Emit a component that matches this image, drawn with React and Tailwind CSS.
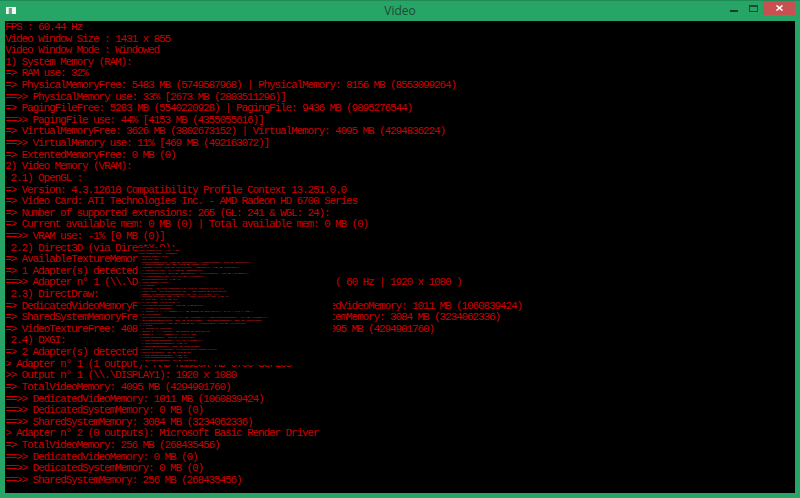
import React from "react";

const logLines = [
  "FPS : 60.44 Hz",
  "Video Window Size : 1431 x 855",
  "Video Window Mode : Windowed",
  "1) System Memory (RAM):",
  "=> RAM use: 32%",
  "=> PhysicalMemoryFree: 5483 MB (5749587968) | PhysicalMemory: 8156 MB (8553099264)",
  "==>> PhysicalMemory use: 33% [2673 MB (2803511296)]",
  "=> PagingFileFree: 5283 MB (5540220928) | PagingFile: 9436 MB (9895276544)",
  "==>> PagingFile use: 44% [4153 MB (4355055616)]",
  "=> VirtualMemoryFree: 3626 MB (3802673152) | VirtualMemory: 4095 MB (4294836224)",
  "==>> VirtualMemory use: 11% [469 MB (492163072)]",
  "=> ExtentedMemoryFree: 0 MB (0)",
  "2) Video Memory (VRAM):",
  " 2.1) OpenGL :",
  "=> Version: 4.3.12618 Compatibility Profile Context 13.251.0.0",
  "=> Video Card: ATI Technologies Inc. - AMD Radeon HD 6700 Series",
  "=> Number of supported extensions: 265 (GL: 241 & WGL: 24):",
  "=> Current available mem: 0 MB (0) | Total available mem: 0 MB (0)",
  "==>> VRAM use: -1% [0 MB (0)]",
  " 2.2) Direct3D (via DirectX 9):",
  "=> AvailableTextureMemory: 4085 MB (4283432960)",
  "=> 1 Adapter(s) detected:",
  "==>> Adapter n° 1 (\\\\.\\DISPLAY1): AMD Radeon HD 6700 Series ( 60 Hz | 1920 x 1080 )",
  " 2.3) DirectDraw:",
  "=> DedicatedVideoMemoryFree: 1011 MB (1060839424) | DedicatedVideoMemory: 1011 MB (1060839424)",
  "=> SharedSystemMemoryFree: 3084 MB (3234062336) | SharedSystemMemory: 3084 MB (3234062336)",
  "=> VideoTextureFree: 4085 MB (4283432960) | VideoTexture: 4095 MB (4294901760)",
  " 2.4) DXGI:",
  "=> 2 Adapter(s) detected:",
  "> Adapter n° 1 (1 output): AMD Radeon HD 6700 Series",
  ">> Output n° 1 (\\\\.\\DISPLAY1): 1920 x 1080",
  "=> TotalVideoMemory: 4095 MB (4294901760)",
  "==>> DedicatedVideoMemory: 1011 MB (1060839424)",
  "==>> DedicatedSystemMemory: 0 MB (0)",
  "==>> SharedSystemMemory: 3084 MB (3234062336)",
  "> Adapter n° 2 (0 outputs): Microsoft Basic Render Driver",
  "=> TotalVideoMemory: 256 MB (268435456)",
  "==>> DedicatedVideoMemory: 0 MB (0)",
  "==>> DedicatedSystemMemory: 0 MB (0)",
  "==>> SharedSystemMemory: 256 MB (268435456)",
];

function TitleBar() {
  return (
    <div className="relative flex h-[20px] shrink-0 items-center justify-center">
      <svg className="absolute left-[6px] top-[6px]" width="10" height="7" viewBox="0 0 10 7">
        <rect width="10" height="7" fill="#f2f7f4" />
        <rect x="2" y="1" width="1" height="6" fill="#cfe0d8" />
        <rect x="3" y="1" width="3" height="6" fill="#7f9c92" />
      </svg>
      <span className="font-['Open_Sans',sans-serif] text-[12px] leading-none text-[#1d4a34]">Video</span>
      <div className="absolute right-[5px] top-0 flex items-start">
        <svg className="mr-[11px] mt-[4px]" width="8" height="7" viewBox="0 0 8 7">
          <rect x="0" y="5" width="8" height="2" fill="#12402a" />
        </svg>
        <svg className="mr-[5px] mt-[4px]" width="9" height="7" viewBox="0 0 9 7">
          <rect x="0.5" y="0.5" width="8" height="6" fill="none" stroke="#1d4a34" />
          <rect x="0.5" y="0.5" width="8" height="1.5" fill="#1d4a34" />
        </svg>
        <div className="flex h-[14px] w-[32px] items-center justify-center bg-[#c75050]">
          <svg width="7" height="6" viewBox="0 0 7 6">
            <path d="M0.5 0.5 L6.5 5.5 M6.5 0.5 L0.5 5.5" stroke="#ffffff" strokeWidth="1.6" fill="none" />
          </svg>
        </div>
      </div>
    </div>
  );
}

function LogLines({ className }) {
  return (
    <div className={className}>
      {logLines.map((line, index) => (
        <div key={index} className="whitespace-pre">
          {line}
        </div>
      ))}
    </div>
  );
}

export default function App() {
  return (
    <div className="flex h-[498px] w-[800px] flex-col overflow-hidden border-t border-[#1f8a55] bg-[#27a567]">
      <TitleBar />
      <div className="relative mx-[5px] mb-[5px] flex-1 overflow-hidden bg-black">
        <LogLines className="pt-[1px] font-['Liberation_Mono',monospace] text-[11px] leading-[11.615px] tracking-[-1.1px] text-[#cc0000]" />
        {/* small copy of the log drawn over the big one */}
        <div className="absolute left-[133px] top-[226px] h-[118px] w-[195px] overflow-hidden bg-black">
          <LogLines className="font-['Liberation_Mono',monospace] text-[2.3px] leading-[2.9px] text-[#ff2020]" />
        </div>
      </div>
    </div>
  );
}
